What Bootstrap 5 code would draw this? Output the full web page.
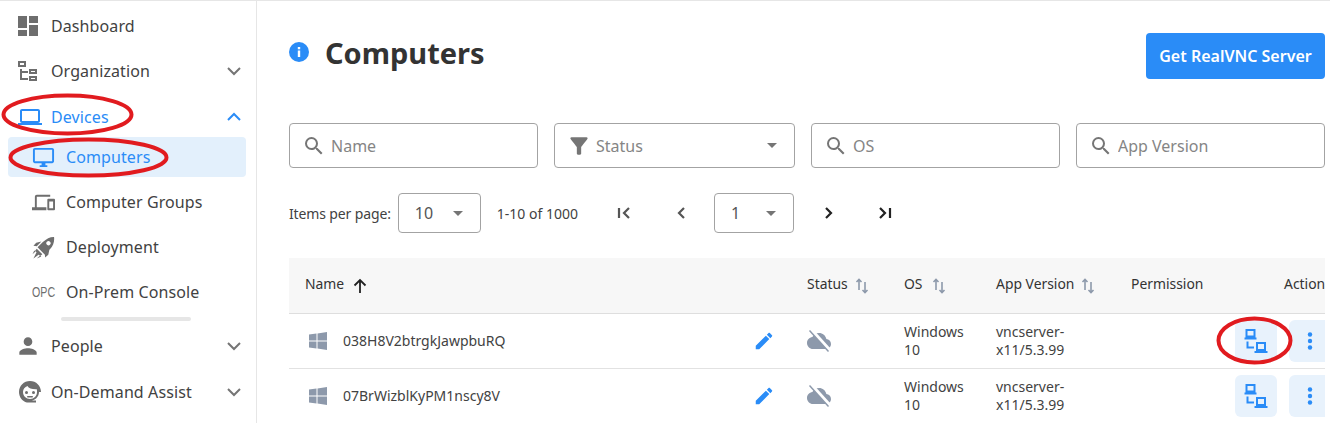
<!DOCTYPE html>
<html lang="en">
<head>
<meta charset="utf-8">
<title>Computers</title>
<link href="https://cdn.jsdelivr.net/npm/bootstrap@5.3.0/dist/css/bootstrap.min.css" rel="stylesheet">
<style>
html,body{height:423px;overflow:hidden}
body{font-family:"Noto Sans",sans-serif;font-size:16px;color:#333;background:#fff}
.shell{height:423px;border-top:1px solid #e6e6e6;position:relative;overflow:hidden}
.side{width:257px;flex:none;border-right:1px solid #e6e6e6;padding:5px 10px 0 8px;letter-spacing:.1px}
.side-row{height:40px;margin-bottom:5px;padding:0 2px 0 10px;display:flex;align-items:center;color:#424242;border-radius:4px;text-decoration:none}
.side-row .ico{width:20px;height:20px;flex:none;fill:#6e6e6e;margin-right:13px}
.side-row .lab{flex:1}
.side-row .chev{width:20px;height:20px;fill:none;stroke:#757575;stroke-width:2;margin-right:0}
.row-blue{color:#2a8cf7;margin-top:6px;margin-bottom:0}
.row-blue .ico{fill:#2a8cf7}.row-blue .chev{stroke:#2a8cf7}
.side-row .ico-wide{width:24px;height:24px;margin-right:9px}
.side-sub{padding-left:25px}
.side-sub .ico{width:23px;height:23px;margin-left:-1px;margin-right:11px}
.row-active{background:#e3f0fc;color:#2a8cf7;margin-bottom:5px}.row-active .ico{fill:#2a8cf7}
.opc{width:22px;margin-left:-1px;margin-right:12px;font-family:"Liberation Sans",sans-serif;font-size:14px;color:#6e6e6e;transform:scaleX(.76);transform-origin:left;white-space:nowrap}
.side-bar{width:130px;height:4px;border-radius:2px;background:#e6e6e6;margin:0 0 5px 53px}
.row-gap{margin-top:6px}
.main{flex:1;min-width:0;padding:0 5px 0 32px}
.head-row{height:122px;padding-top:32px}
.page-title{font-size:29px;font-weight:700;line-height:40px;margin:0 0 0 16px;color:#333}
.info{width:20px;height:20px;margin-top:-2px}
.get-btn{width:179px;height:46px;background:#2a8cf7;border:0;border-radius:4px;color:#fff;font-weight:600;font-size:16px;padding:0}
.filters{gap:16px;height:45px}
.fbox{height:45px;border:1px solid #a3a3a3;border-radius:4px;padding:0 17px 0 12px;color:#858585;background:#fff}
.fbox svg{fill:#757575;flex:none}
.fw{width:249px}.fn{width:241px}
.fbox input{border:0;outline:0;padding:0;min-width:0;flex:1;margin-left:5px;font-size:16px;background:transparent}
.fbox input::placeholder{color:#858585;opacity:1}
.fn svg{margin-left:-1px}
.fn span.lbl{margin-left:4px}
.caret{width:0;height:0;border-left:5px solid transparent;border-right:5px solid transparent;border-top:5px solid #757575;flex:none}
.pager{height:40px;margin-top:25px;font-size:14px;color:#424242}
.per-lab{letter-spacing:-.13px}
.sbox{height:40px;border:1px solid #a3a3a3;border-radius:4px;font-size:16px;color:#555;padding:0 17px 0 16px}
.pg-ico{width:24px;height:24px;fill:none;stroke-width:2.2}
.tbl-wrap{margin-top:25px;width:1036px;overflow:hidden}
.dtable{table-layout:fixed;width:1036px;margin:0;font-size:14px;color:#424242}
.dtable th{background:#f7f7f7;height:55px;font-weight:400;vertical-align:middle;padding:0 0 1px 16px;border-bottom:1px solid #dedede;white-space:nowrap;color:#333;font-size:13.9px}
.dtable td{height:55px;vertical-align:middle;padding:0 0 0 16px;border-bottom:1px solid #e2e2e2;line-height:18px}
.sort{width:16px;height:16px;margin-left:6px;fill:none;stroke:#8d99ab;stroke-width:1.6}
.act-btn{width:42px;height:42px;padding:0;border:0;border-radius:6px;background:#e8f2fc;display:inline-flex;align-items:center;justify-content:center;flex:none}
.acts{gap:12px;width:100px}
.notes{position:absolute;left:0;top:-1px;pointer-events:none}
.notes ellipse{fill:none;stroke:#e11b1f;stroke-width:4}
</style>
</head>
<body>
<div class="shell d-flex">
<nav class="side">
  <a class="side-row"><svg class="ico" viewBox="0 0 20 20"><path d="M0 0h9v12H0zM11 0h9v7h-9zM0 14h9v6H0zM11 9h9v11h-9z"/></svg><span class="lab">Dashboard</span></a>
  <a class="side-row"><svg class="ico" viewBox="0 0 20 20"><path d="M0 0h8v6H0zm2 2v2h4V2zM11 8h8v5h-8zm2 2v1h4v-1zM11 15h8v5h-8zm2 2v1h4v-1zM2 8h2v2h6v2H4v5h6v2H2z" fill-rule="evenodd"/></svg><span class="lab">Organization</span><svg class="chev" viewBox="0 0 20 20"><path d="M4 7l6 6 6-6"/></svg></a>
  <a class="side-row row-blue"><svg class="ico ico-wide" viewBox="0 0 24 24"><path d="M20 18c1.100 0 2-.9 2-2V6c0-1.100-.9-2-2-2H4c-1.100 0-2 .9-2 2v10c0 1.100.9 2 2 2H0v2h24v-2h-4zM4 6h16v10H4V6z"/></svg><span class="lab">Devices</span><svg class="chev" viewBox="0 0 20 20"><path d="M4 13l6-6 6 6"/></svg></a>
  <a class="side-row side-sub row-active"><svg class="ico" viewBox="0 0 24 24"><path d="M21 2H3c-1.100 0-2 .9-2 2v12c0 1.100.9 2 2 2h7v2H8v2h8v-2h-2v-2h7c1.100 0 2-.9 2-2V4c0-1.100-.9-2-2-2zm0 14H3V4h18v12z"/></svg><span class="lab">Computers</span></a>
  <a class="side-row side-sub"><svg class="ico" viewBox="0 0 24 24"><path d="M3 6c0-1.100.9-2 2-2h14v2H5v11h10v3H0v-3h3zM17 8h6c.6 0 1 .4 1 1v10c0 .6-.4 1-1 1h-6c-.6 0-1-.4-1-1V9c0-.6.4-1 1-1zm1 3v7h4v-7z" fill-rule="evenodd"/></svg><span class="lab">Computer Groups</span></a>
  <a class="side-row side-sub"><svg class="ico" viewBox="0 0 24 24"><path d="M23 1c.6 4.800-.8 9.200-4.300 12.700l-5.500 5.500-7.400-7.400 5.500-5.500C15.300 2.800 19 .8 23 1zM15.800 5.800a2.200 2.200 0 1 0 3.100 3.100 2.200 2.200 0 0 0-3.100-3.100zM5 13.200l5.800 5.800-2.300 1.800-5.300-5.300zM9.800 5.800L4.400 7 1.500 10.300l3.500.3zM18.200 14.200L17 19.600 13.700 22.500l-.3-3.500zM4.800 16.800l2.400 2.400L1.500 23.500zM2.400 15l1.300 1.300L.5 19zM8.500 20.300l1.200 1.200L5 23.500z"/></svg><span class="lab">Deployment</span></a>
  <a class="side-row side-sub"><span class="opc">OPC</span><span class="lab">On-Prem Console</span></a>
  <div class="side-bar"></div>
  <a class="side-row"><svg class="ico" viewBox="0 0 24 24"><path d="M12 12c2.210 0 4-1.790 4-4s-1.790-4-4-4-4 1.790-4 4 1.790 4 4 4zm0 2c-2.670 0-8 1.340-8 4v2h16v-2c0-2.660-5.330-4-8-4z" transform="translate(-3.600 -3.600) scale(1.300)"/></svg><span class="lab">People</span><svg class="chev" viewBox="0 0 20 20"><path d="M4 7l6 6 6-6"/></svg></a>
  <a class="side-row row-gap"><svg class="ico ico-wide" viewBox="0 0 24 24"><path d="M12 1C5.900 1 1 5.900 1 12c0 5 3.300 9.200 7.900 10.600h9.100v-2h-6c5 0 9-3.700 9-8.600h2c0-6.100-4.900-11-11-11zm-2.500 5c1.200 2.300 4.500 3.500 9.300 3.300.2.900.2 1.800.2 2.700 0 3.900-3.100 7-7 7s-7-3.100-7-7c0-2.700 1.800-5 4.500-6z" fill-rule="evenodd"/><circle cx="8.500" cy="12.500" r="1.500"/><circle cx="15.500" cy="12.500" r="1.500"/><rect x="9" y="16" width="6" height="1.600" rx=".8"/></svg><span class="lab">On-Demand Assist</span><svg class="chev" viewBox="0 0 20 20"><path d="M4 7l6 6 6-6"/></svg></a>
</nav>
<main class="main">
  <div class="head-row d-flex align-items-start">
    <div class="d-flex align-items-center flex-grow-1" style="height:40px">
      <svg class="info" viewBox="0 0 20 20"><circle cx="10" cy="10" r="10" fill="#2a8cf7"/><rect x="8.800" y="8.500" width="2.400" height="6.500" fill="#fff"/><rect x="8.800" y="5" width="2.400" height="2.300" fill="#fff"/></svg>
      <h1 class="page-title">Computers</h1>
    </div>
    <button class="btn get-btn" type="button">Get RealVNC Server</button>
  </div>
  <div class="filters d-flex">
    <label class="fbox fw d-flex align-items-center mb-0"><svg width="24" height="24" viewBox="0 0 24 24"><path d="M15.500 14h-.79l-.28-.27A6.471 6.471 0 0 0 16 9.500 6.500 6.500 0 1 0 9.500 16c1.610 0 3.090-.59 4.230-1.570l.27.28v.79l5 4.990L20.490 19l-4.990-5zm-6 0C7.010 14 5 11.990 5 9.500S7.010 5 9.500 5 14 7.010 14 9.500 11.990 14 9.500 14z"/></svg><input placeholder="Name" aria-label="Name"></label>
    <div class="fbox fn d-flex align-items-center"><svg width="26" height="26" viewBox="0 0 24 24"><path d="M4.250 5.610C6.270 8.200 10 13 10 13v6c0 .55.45 1 1 1h2c.55 0 1-.45 1-1v-6s3.720-4.800 5.740-7.390c.51-.66.04-1.610-.79-1.610H5.040c-.83 0-1.300.95-.79 1.610z"/></svg><span class="lbl flex-grow-1">Status</span><span class="caret"></span></div>
    <label class="fbox fw d-flex align-items-center mb-0"><svg width="24" height="24" viewBox="0 0 24 24"><path d="M15.500 14h-.79l-.28-.27A6.471 6.471 0 0 0 16 9.500 6.500 6.500 0 1 0 9.500 16c1.610 0 3.090-.59 4.230-1.570l.27.28v.79l5 4.990L20.490 19l-4.990-5zm-6 0C7.010 14 5 11.990 5 9.500S7.010 5 9.500 5 14 7.010 14 9.500 11.990 14 9.500 14z"/></svg><input placeholder="OS" aria-label="OS"></label>
    <label class="fbox fw d-flex align-items-center mb-0"><svg width="24" height="24" viewBox="0 0 24 24"><path d="M15.500 14h-.79l-.28-.27A6.471 6.471 0 0 0 16 9.500 6.500 6.500 0 1 0 9.500 16c1.610 0 3.090-.59 4.230-1.570l.27.28v.79l5 4.990L20.490 19l-4.990-5zm-6 0C7.010 14 5 11.990 5 9.500S7.010 5 9.500 5 14 7.010 14 9.500 11.990 14 9.500 14z"/></svg><input placeholder="App Version" aria-label="App Version"></label>
  </div>
  <div class="pager d-flex align-items-center">
    <span class="per-lab">Items per page:</span>
    <div class="sbox d-flex align-items-center justify-content-between" style="width:83px;margin-left:7px"><span>10</span><span class="caret"></span></div>
    <span style="margin-left:16px">1-10 of 1000</span>
    <svg class="pg-ico" style="margin-left:34px;stroke:#555" viewBox="0 0 24 24"><path d="M7 7v10M17 7l-5 5 5 5"/></svg>
    <svg class="pg-ico" style="margin-left:33px;stroke:#555" viewBox="0 0 24 24"><path d="M15 7l-5 5 5 5"/></svg>
    <div class="sbox d-flex align-items-center justify-content-between" style="width:80px;margin-left:21px"><span>1</span><span class="caret"></span></div>
    <svg class="pg-ico" style="margin-left:23px;stroke:#222" viewBox="0 0 24 24"><path d="M9 7l5 5-5 5"/></svg>
    <svg class="pg-ico" style="margin-left:32px;stroke:#222" viewBox="0 0 24 24"><path d="M7 7l5 5-5 5M17 7v10"/></svg>
  </div>
  <div class="tbl-wrap">
    <table class="table dtable">
      <colgroup><col style="width:502px"><col style="width:97px"><col style="width:92px"><col style="width:135px"><col style="width:104px"><col style="width:106px"></colgroup>
      <thead><tr>
        <th>Name <svg width="18" height="18" viewBox="0 0 18 18" fill="none" stroke="#222" stroke-width="1.800" style="margin-left:3px"><path d="M9 16V3M3.500 8.500L9 3l5.500 5.500"/></svg></th>
        <th>Status<svg class="sort" viewBox="0 0 16 16"><path d="M5 12V1.500M2.500 4L5 1.500 7.500 4M11 4v10.500M8.500 12l2.500 2.500 2.500-2.500"/></svg></th>
        <th>OS<svg class="sort" style="margin-left:9px" viewBox="0 0 16 16"><path d="M5 12V1.500M2.500 4L5 1.500 7.500 4M11 4v10.500M8.500 12l2.500 2.500 2.500-2.500"/></svg></th>
        <th>App Version<svg class="sort" viewBox="0 0 16 16"><path d="M5 12V1.500M2.500 4L5 1.500 7.500 4M11 4v10.500M8.500 12l2.500 2.500 2.500-2.500"/></svg></th>
        <th>Permission</th>
        <th style="padding-left:65px">Action</th>
      </tr></thead>
      <tbody>
      <tr>
        <td><div class="d-flex align-items-center"><svg style="margin-left:4px" width="18" height="18" viewBox="0 0 18 18" fill="#8d99ab"><path d="M0 2.600l7.500-1v7H0zM8.500 1.400L18 0v8.600H8.500zM0 9.500h7.500v7l-7.500-1zM8.500 9.500H18V18l-9.500-1.400z"/></svg><span class="flex-grow-1" style="margin-left:16px">038H8V2btrgkJawpbuRQ</span><svg width="22" height="22" viewBox="0 0 24 24" fill="#2a8cf7" style="margin-right:16px"><path d="M3 17.250V21h3.750L17.810 9.940l-3.750-3.750L3 17.250zM20.710 7.040c.39-.39.39-1.020 0-1.410l-2.340-2.340c-.39-.39-1.020-.39-1.410 0l-1.830 1.830 3.750 3.750 1.830-1.830z"/></svg></div></td>
        <td><svg width="24" height="24" viewBox="0 0 24 24" fill="#8d99ab"><path d="M19.350 10.040C18.670 6.590 15.640 4 12 4 9.110 4 6.600 5.640 5.350 8.040 2.340 8.360 0 10.910 0 14c0 3.310 2.690 6 6 6h13c2.760 0 5-2.240 5-5 0-2.640-2.050-4.780-4.650-4.960z"/><path d="M4 .5l19 21" stroke="#fff" stroke-width="3.400"/><path d="M2.500 1.500l19 21" stroke="#8d99ab" stroke-width="1.500"/></svg></td>
        <td>Windows<br>10</td>
        <td>vncserver-<br>x11/5.3.99</td>
        <td></td>
        <td><div class="acts d-flex"><button class="act-btn" type="button" aria-label="Connect"><svg width="24" height="24" viewBox="0 0 24 24" fill="none" stroke="#2a8cf7" stroke-width="2"><path d="M2.500 1h8v6.500h-8zM.5 9.500h12M3.500 12.500v6h6.500M13 14h8v7h-8zM10.500 23h13"/></svg></button><button class="act-btn" type="button" aria-label="More"><svg width="24" height="24" viewBox="0 0 24 24" fill="#2a8cf7"><circle cx="12" cy="5.500" r="2.200"/><circle cx="12" cy="12" r="2.200"/><circle cx="12" cy="18.500" r="2.200"/></svg></button></div></td>
      </tr>
      <tr>
        <td><div class="d-flex align-items-center"><svg style="margin-left:4px" width="18" height="18" viewBox="0 0 18 18" fill="#8d99ab"><path d="M0 2.600l7.500-1v7H0zM8.500 1.400L18 0v8.600H8.500zM0 9.500h7.500v7l-7.500-1zM8.500 9.500H18V18l-9.500-1.400z"/></svg><span class="flex-grow-1" style="margin-left:16px">07BrWizblKyPM1nscy8V</span><svg width="22" height="22" viewBox="0 0 24 24" fill="#2a8cf7" style="margin-right:16px"><path d="M3 17.250V21h3.750L17.810 9.940l-3.750-3.750L3 17.250zM20.710 7.040c.39-.39.39-1.020 0-1.410l-2.340-2.340c-.39-.39-1.020-.39-1.410 0l-1.830 1.830 3.750 3.750 1.830-1.830z"/></svg></div></td>
        <td><svg width="24" height="24" viewBox="0 0 24 24" fill="#8d99ab"><path d="M19.350 10.040C18.670 6.590 15.640 4 12 4 9.110 4 6.600 5.640 5.350 8.040 2.340 8.360 0 10.910 0 14c0 3.310 2.690 6 6 6h13c2.760 0 5-2.240 5-5 0-2.640-2.050-4.780-4.650-4.960z"/><path d="M4 .5l19 21" stroke="#fff" stroke-width="3.400"/><path d="M2.500 1.500l19 21" stroke="#8d99ab" stroke-width="1.500"/></svg></td>
        <td>Windows<br>10</td>
        <td>vncserver-<br>x11/5.3.99</td>
        <td></td>
        <td><div class="acts d-flex"><button class="act-btn" type="button" aria-label="Connect"><svg width="24" height="24" viewBox="0 0 24 24" fill="none" stroke="#2a8cf7" stroke-width="2"><path d="M2.500 1h8v6.500h-8zM.5 9.500h12M3.500 12.500v6h6.500M13 14h8v7h-8zM10.500 23h13"/></svg></button><button class="act-btn" type="button" aria-label="More"><svg width="24" height="24" viewBox="0 0 24 24" fill="#2a8cf7"><circle cx="12" cy="5.500" r="2.200"/><circle cx="12" cy="12" r="2.200"/><circle cx="12" cy="18.500" r="2.200"/></svg></button></div></td>
      </tr>
      </tbody>
    </table>
  </div>
</main>
<svg class="notes" width="1330" height="423" viewBox="0 0 1330 423" aria-hidden="true">
  <ellipse cx="67.500" cy="114.500" rx="64" ry="19"/>
  <ellipse cx="88.500" cy="157.500" rx="78" ry="18"/>
  <ellipse cx="1254.500" cy="340.500" rx="36" ry="22"/>
</svg>
</div>
</body>
</html>
